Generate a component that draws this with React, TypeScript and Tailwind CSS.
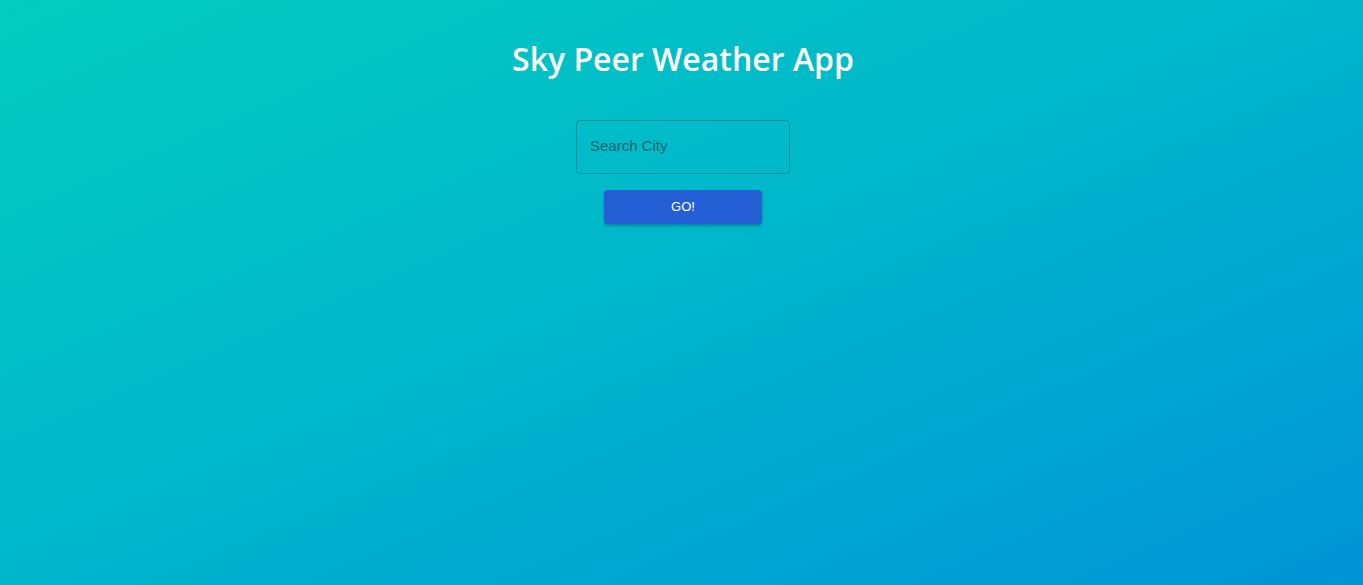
import React from "react";

export default function App() {
  return (
    <div className="min-h-[585px] w-full pl-[3px] bg-[linear-gradient(to_bottom_right,#03cdbf,#00b5cc_50%,#0094d6)] flex flex-col items-center">
      <h1 className="mt-[37px] text-white text-[32px] leading-[44px] font-semibold font-['Open_Sans',sans-serif]">
        Sky Peer Weather App
      </h1>
      <div className="mt-[39px] w-[214px] h-[54px] rounded-[4px] border border-[rgba(0,60,80,0.35)] flex items-center px-[13px] pb-[2px]">
        <input
          placeholder="Search City"
          className="w-full bg-transparent outline-none text-[15px] font-['Liberation_Sans',Arial,sans-serif] text-[#0b5f6b] placeholder:text-[#0b6470]"
        />
      </div>
      <button className="mt-[16px] w-[158px] h-[34px] rounded-[4px] bg-[#245fd6] text-white text-[13px] font-['Liberation_Sans',Arial,sans-serif] shadow-[0_2px_3px_rgba(0,0,0,0.25)]">
        GO!
      </button>
    </div>
  );
}
